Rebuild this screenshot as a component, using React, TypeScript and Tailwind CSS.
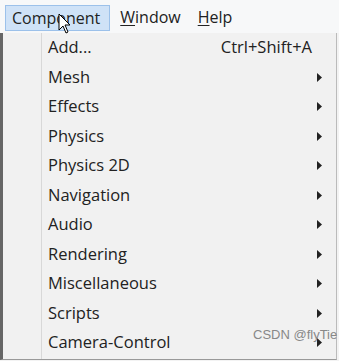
import React from 'react';

const items: { label: string; shortcut?: string; sub?: boolean }[] = [
    { label: 'Add...', shortcut: 'Ctrl+Shift+A' },
    { label: 'Mesh', sub: true },
    { label: 'Effects', sub: true },
    { label: 'Physics', sub: true },
    { label: 'Physics 2D', sub: true },
    { label: 'Navigation', sub: true },
    { label: 'Audio', sub: true },
    { label: 'Rendering', sub: true },
    { label: 'Miscellaneous', sub: true },
    { label: 'Scripts', sub: true },
    { label: 'Camera-Control', sub: true },
];

const Arrow = () => (
    <svg width="5" height="9" viewBox="0 0 5 9">
        <path d="M0 0 L5 4.5 L0 9 Z" fill="#222" />
    </svg>
);

const App: React.FC = () => {
    return (
        <div className="w-[339px] h-[361px] bg-[#f3f3f3] relative overflow-hidden text-[#222]" style={{ fontFamily: '"Open Sans", "Noto Sans", sans-serif' }}>
            {/* menu bar */}
            <div className="h-[33px] bg-[#f7f8f9] flex items-center pl-[5px] text-[16px]">
                <div className="h-[26px] mt-[2px] pl-[6px] pr-[9px] flex items-center bg-[#cfe2f7] border border-[#9cc1ea]">Component</div>
                <div className="px-[8px] ml-[2px]"><span className="underline underline-offset-2">W</span>indow</div>
                <div className="px-[9px]"><span className="underline underline-offset-2">H</span>elp</div>
            </div>

            {/* dropdown */}
            <div className="absolute left-0 top-[33px] w-[337px] h-[327px] bg-[#f1f1f1] border-l-[3px] border-l-[#666] border-b border-b-[#999] border-r border-r-[#bbb] flex">
                <div className="w-[39px] border-r border-r-[#d8d8d8] shrink-0" />
                <div className="flex-1 flex flex-col pl-[6px] pr-[14px] text-[16.5px]">
                    {items.map(it => (
                        <div key={it.label} className="h-[29.5px] flex items-center justify-between">
                            <span>{it.label}</span>
                            {it.shortcut && <span className="mr-[10px]">{it.shortcut}</span>}
                            {it.sub && <Arrow />}
                        </div>
                    ))}
                </div>
            </div>

            <div className="absolute left-[253px] top-[325px] text-[13px] text-[#888]" style={{ fontFamily: '"Liberation Sans", sans-serif' }}>CSDN @flyTie</div>

            {/* cursor */}
            <svg className="absolute left-[58px] top-[13px]" width="14" height="22" viewBox="0 0 14 22">
                <path d="M1 1 L1 17 L5 13 L8 20 L10 19 L7 12 L12 12 Z" fill="#fff" stroke="#000" strokeWidth="1" />
            </svg>
        </div>
    );
};

export default App;
